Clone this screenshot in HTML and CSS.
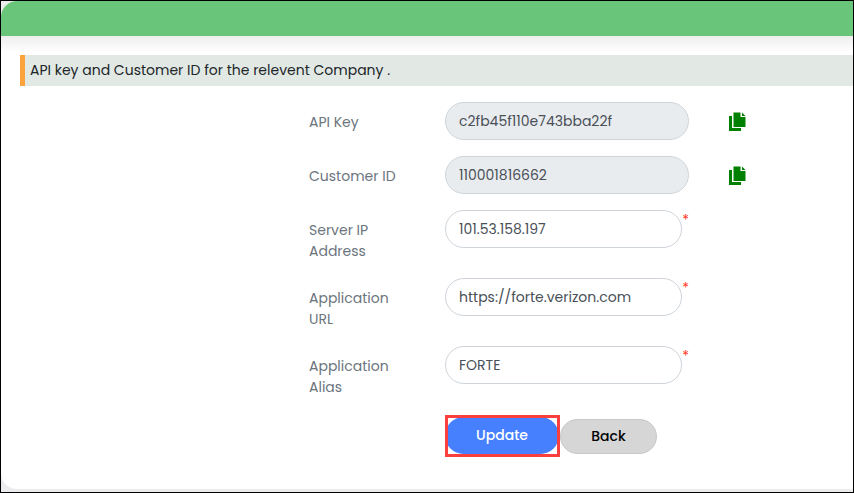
FILE: index.html
```html
<!DOCTYPE html>
<html lang="en">
<head>
    <meta charset="utf-8">
    <title>API Settings</title>
    <link rel="stylesheet" href="styles.css">
</head>
<body>
    <main class="panel">
        <header class="panel-header"></header>
        <div class="panel-body">
            <p class="notice">API key and Customer ID for the relevent Company .</p>
            <form class="settings">
                <div class="row">
                    <label for="apiKey">API Key</label>
                    <div class="field"><input type="text" id="apiKey" value="c2fb45f110e743bba22f" readonly></div>
                    <button type="button" class="copy" aria-label="Copy API Key">
                        <svg viewBox="0 0 18 20" width="18" height="20">
                            <path d="M1 4h3v12h9v3H1z"/>
                            <path d="M5.500 .5h7V5h5v10H5.500z"/>
                            <path d="M14 .5L17.500 4H14z"/>
                        </svg>
                    </button>
                </div>
                <div class="row">
                    <label for="customerId">Customer ID</label>
                    <div class="field"><input type="text" id="customerId" value="110001816662" readonly></div>
                    <button type="button" class="copy" aria-label="Copy Customer ID">
                        <svg viewBox="0 0 18 20" width="18" height="20">
                            <path d="M1 4h3v12h9v3H1z"/>
                            <path d="M5.500 .5h7V5h5v10H5.500z"/>
                            <path d="M14 .5L17.500 4H14z"/>
                        </svg>
                    </button>
                </div>
                <div class="row">
                    <label for="serverIp">Server IP Address</label>
                    <div class="field"><input type="text" id="serverIp" value="101.53.158.197" required><span class="star">*</span></div>
                </div>
                <div class="row">
                    <label for="appUrl">Application URL</label>
                    <div class="field"><input type="text" id="appUrl" value="https://forte.verizon.com" required><span class="star">*</span></div>
                </div>
                <div class="row">
                    <label for="appAlias">Application Alias</label>
                    <div class="field"><input type="text" id="appAlias" value="FORTE" required><span class="star">*</span></div>
                </div>
                <div class="row">
                    <div class="actions">
                        <div class="highlight"><button type="button" class="btn btn-update">Update</button></div>
                        <button type="button" class="btn btn-back">Back</button>
                    </div>
                </div>
            </form>
        </div>
    </main>
</body>
</html>
```

FILE: styles.css
```css
* {
    box-sizing: border-box;
}

body {
    margin: 0;
    min-height: 100vh;
    display: flex;
    flex-direction: column;
    border: 1px solid #000;
    background-color: #ececee;
    font-family: Poppins, Inter, sans-serif;
    font-size: 14px;
    line-height: 21px;
    color: #212529;
}

.panel {
    flex: 1;
    margin-bottom: 3px;
    background-color: #fff;
    border-radius: 16px 0 0 16px;
    overflow: hidden;
}

.panel-header {
    height: 35px;
    background-color: #69c57a;
}

.panel-body {
    padding-top: 19px;
    background: linear-gradient(#eee, #fff 16px);
}

.notice {
    margin: 0 0 16px 19px;
    padding: 5px;
    border-left: 5px solid #fba33c;
    background-color: #e2e9e5;
}

.row {
    display: grid;
    grid-template-columns: minmax(0, 308fr) minmax(0, 136fr) minmax(0, 244fr) minmax(0, 164fr);
    align-items: start;
    margin-bottom: 16px;
}

.row label {
    grid-column: 2;
    padding: 10px 30px 0 0;
    color: #6c757d;
}

.field {
    grid-column: 3;
    display: flex;
}

.field input {
    flex: 1;
    min-width: 0;
    height: 38px;
    padding: 0 13px;
    border: 1px solid #ced4da;
    border-radius: 19px;
    background-color: #fff;
    font: inherit;
    color: #495057;
}

.field input:read-only {
    background-color: #e9ecef;
}

.star {
    width: 7px;
    text-align: right;
    color: #ff3b1f;
}

.copy {
    justify-self: start;
    margin: 10px 0 0 39px;
    padding: 0;
    border: none;
    background: none;
    cursor: pointer;
}

.copy svg {
    display: block;
    fill: #008000;
}

.actions {
    grid-column: 3 / 5;
    display: flex;
    align-items: center;
    margin-top: 1px;
}

.highlight {
    position: relative;
    padding: 2px 1px 3px 0;
}

/* red frame lies over the button edges */
.highlight::after {
    content: "";
    position: absolute;
    inset: 0;
    border: 3px solid #f9403f;
    pointer-events: none;
}

.btn {
    display: block;
    border: none;
    border-radius: 19px;
    font: inherit;
    font-weight: 500;
    cursor: pointer;
}

.btn-update {
    width: 114px;
    height: 37px;
    background-color: #4680ff;
    color: #fff;
}

.btn-back {
    width: 97px;
    height: 35px;
    border: 1px solid #c8c8c8;
    background-color: #d6d6d6;
    color: #000;
}
```
